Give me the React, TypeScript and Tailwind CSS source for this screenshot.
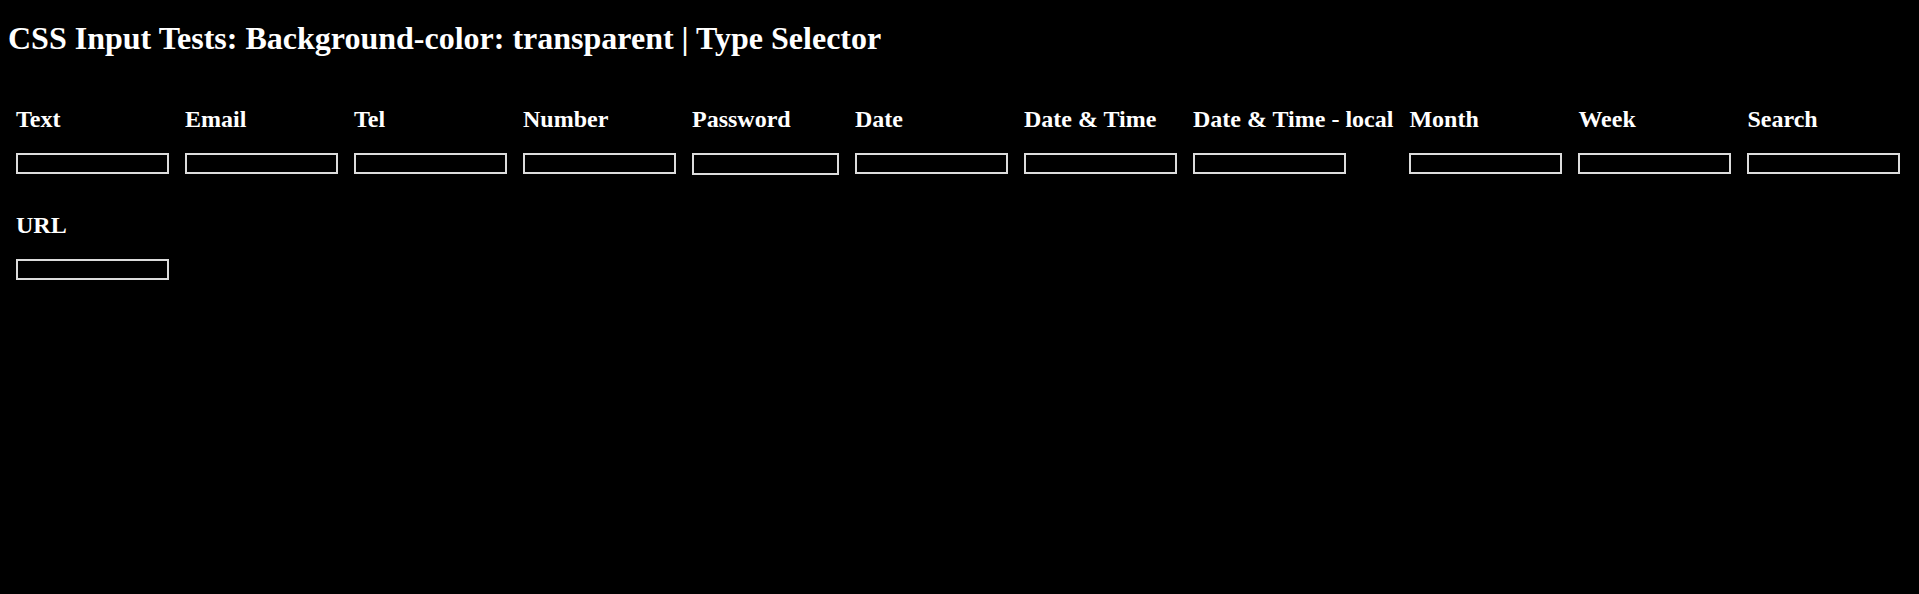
const fields = [
  { label: "Text", type: "text" },
  { label: "Email", type: "email" },
  { label: "Tel", type: "tel" },
  { label: "Number", type: "text" },
  { label: "Password", type: "password" },
  { label: "Date", type: "text" },
  { label: "Date & Time", type: "text" },
  { label: "Date & Time - local", type: "text" },
  { label: "Month", type: "text" },
  { label: "Week", type: "text" },
  { label: "Search", type: "text" },
  { label: "URL", type: "url" },
];

const App = () => {
  return (
    <div className="min-h-screen bg-black px-2 pt-5 text-white font-['Liberation_Serif','Times_New_Roman',serif]">
      {/* Page title */}
      <h1 className="text-[32px] font-bold leading-[37px]">
        CSS Input Tests: Background-color: transparent | Type Selector
      </h1>

      {/* Input fields */}
      <div className="mt-[48px] flex flex-wrap gap-x-4 gap-y-[36px] px-2">
        {fields.map((f) => (
          <div key={f.label} className="flex flex-col items-start gap-5">
            <label className="text-2xl font-bold leading-[28px]">{f.label}</label>
            {f.type === "password" ? (
              <input
                type="password"
                className="h-[22px] w-[147px] border-2 border-[#dcdcdc] bg-transparent outline-none"
              />
            ) : (
              <input
                type={f.type}
                className="h-[21px] w-[153px] border-2 border-[#dcdcdc] bg-transparent outline-none"
              />
            )}
          </div>
        ))}
      </div>
    </div>
  );
};

export default App;
